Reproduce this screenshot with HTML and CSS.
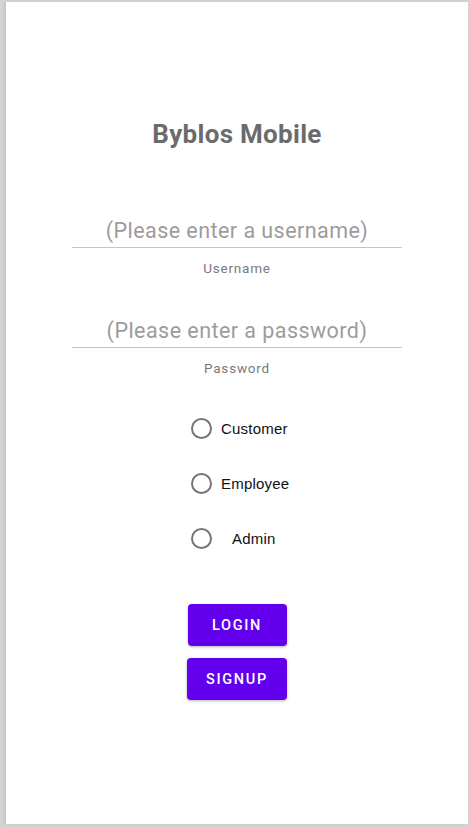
FILE: index.html
```html
<!DOCTYPE html>
<html>
<head>
<meta charset="utf-8">
<link rel="stylesheet" href="styles.css">
</head>
<body>
<div class="screen">
  <h1 class="title">Byblos Mobile</h1>

  <div class="field field-user">
    <input class="input" type="text" placeholder="(Please enter a username)">
    <div class="label">Username</div>
  </div>

  <div class="field field-pass">
    <input class="input" type="password" placeholder="(Please enter a password)">
    <div class="label">Password</div>
  </div>

  <div class="radios">
    <label class="radio"><span class="circle"></span><span class="rtext">Customer</span></label>
    <label class="radio"><span class="circle"></span><span class="rtext">Employee</span></label>
    <label class="radio"><span class="circle"></span><span class="rtext rtext-admin">Admin</span></label>
  </div>

  <div class="buttons">
    <button class="btn btn-login">LOGIN</button>
    <button class="btn btn-signup">SIGNUP</button>
  </div>
</div>
</body>
</html>
```

FILE: styles.css
```css
html, body {
  margin: 0;
  padding: 0;
}
body {
  background: #d4d4d4;
  padding: 2px 2px 4px 6px;
  width: 470px;
  height: 828px;
  box-sizing: border-box;
  font-family: Roboto, "Noto Sans", sans-serif;
}
.screen {
  background: #ffffff;
  height: 822px;
  display: flex;
  flex-direction: column;
  align-items: center;
  box-shadow: -2px 0 3px rgba(0,0,0,0.08);
}
.title {
  margin: 117px 0 0 0;
  font-size: 26px;
  line-height: 30px;
  font-weight: 700;
  color: #6b6b6b;
  letter-spacing: 0.3px;
}
.field {
  display: flex;
  flex-direction: column;
  align-items: center;
  width: 330px;
}
.field-user { margin-top: 67px; }
.field-pass { margin-top: 39px; }
.input {
  width: 330px;
  height: 32px;
  box-sizing: border-box;
  border: none;
  border-bottom: 1.5px solid #c4c4c4;
  outline: none;
  padding: 0 0 2px 0;
  text-align: center;
  font-family: Roboto, sans-serif;
  font-size: 21.5px;
  letter-spacing: 0.45px;
  background: transparent;
}
.input::placeholder {
  color: #9c9c9c;
}
.label {
  margin-top: 11px;
  font-size: 13.5px;
  line-height: 18px;
  color: #7a7a7a;
  letter-spacing: 0.8px;
}
.radios {
  display: flex;
  flex-direction: column;
  align-self: flex-start;
  margin-left: 185px;
  margin-top: 40px;
  gap: 33px;
}
.radio {
  display: flex;
  align-items: center;
  height: 22px;
}
.circle {
  width: 21px;
  height: 21px;
  box-sizing: border-box;
  border: 2px solid #757575;
  border-radius: 50%;
}
.rtext {
  margin-left: 9px;
  font-family: "Liberation Sans", Arial, sans-serif;
  font-size: 15px;
  letter-spacing: 0.2px;
  color: #111;
}
.rtext-admin {
  margin-left: 20px;
}
.buttons {
  display: flex;
  flex-direction: column;
  align-items: center;
  margin-top: 55px;
  gap: 12px;
}
.btn {
  background: #6200ee;
  color: #ffffff;
  border: none;
  border-radius: 4px;
  height: 42px;
  min-width: 99px;
  padding: 0 19px;
  font-family: Roboto, sans-serif;
  font-weight: 500;
  font-size: 14.5px;
  letter-spacing: 1.7px;
  box-shadow: 0 1px 3px rgba(0,0,0,0.3);
}
```
